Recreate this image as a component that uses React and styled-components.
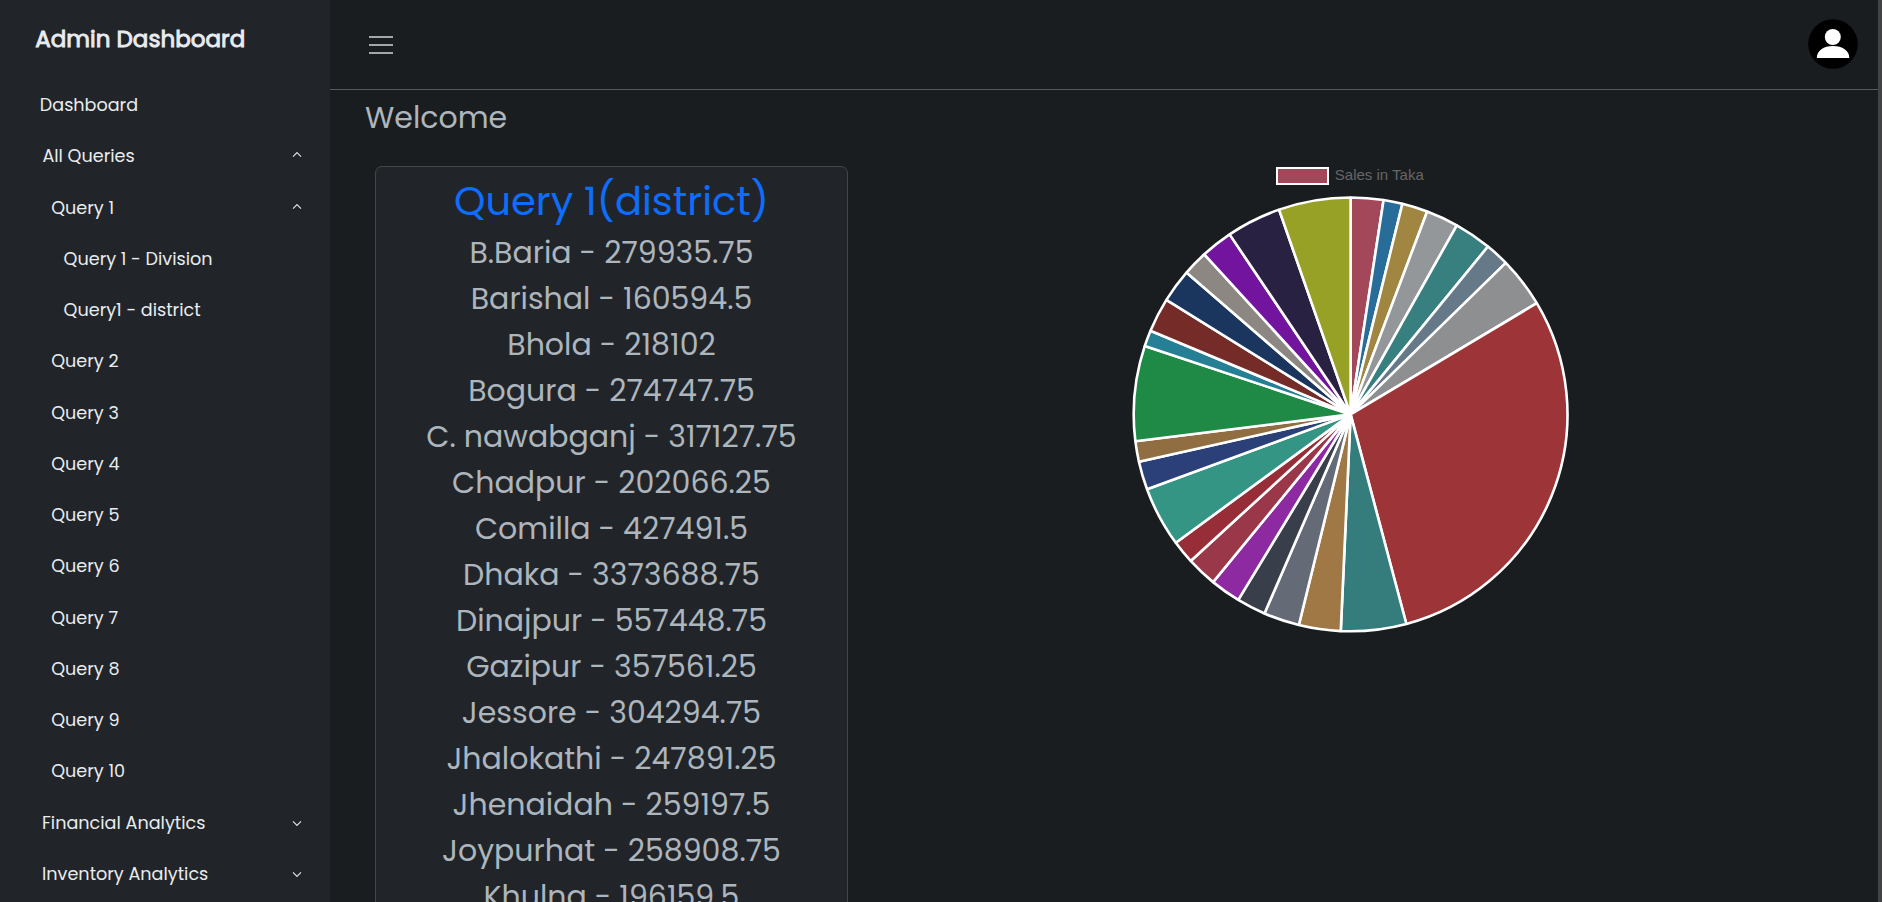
import React from "react";
import styled, { createGlobalStyle } from "styled-components";

const GlobalStyle = createGlobalStyle`
  *, *::before, *::after { box-sizing: border-box; }
  html, body, #root { height: 100%; margin: 0; }
  body {
    overflow: hidden;
    background: #1a1d20;
    color: #adb5bd;
    font-family: Poppins, Inter, "Open Sans", sans-serif;
  }
  h1, h2, p, ul { margin: 0; padding: 0; font-weight: 400; }
`;

const Shell = styled.div`
  display: flex;
  height: 902px;
  overflow: hidden;
`;

const Sidebar = styled.aside`
  flex: 0 0 330px;
  background: #212529;
  color: #e9ecef;
`;

const Brand = styled.h1`
  height: 79.4px;
  padding-left: 35.2px;
  font-size: 23.04px;
  line-height: 78px;
  -webkit-text-stroke: 0.9px currentColor;
`;

const NavItem = styled.a`
  display: flex;
  align-items: center;
  justify-content: space-between;
  height: 51.27px;
  padding: 0 28px 0 ${(p) => p.$indent}px;
  font-size: 17.6px;
  line-height: 26px;
`;

const Chevron = styled.svg`
  width: 10px;
  height: 6px;
  fill: none;
  stroke: #dee2e6;
  stroke-width: 1.2;
  transform: ${(p) => (p.$open ? "translateY(-1.4px) rotate(180deg)" : "translateY(0.3px)")};
`;

const Main = styled.main`
  flex: 1;
  min-width: 0;
`;

const TopBar = styled.header`
  display: flex;
  align-items: center;
  justify-content: space-between;
  height: 90px;
  padding: 0 20px 1px 39px;
  border-bottom: 1px solid #55595c;
`;

const MenuIcon = styled.svg`
  width: 24px;
  height: 18px;
  margin-top: 2px;
  fill: #a4a6a8;
`;

const Avatar = styled.svg`
  width: 50px;
  height: 50px;
`;

const Welcome = styled.h2`
  padding-left: 35px;
  height: 76px;
  font-size: 30px;
  line-height: 56px;
`;

const Columns = styled.div`
  display: flex;
  align-items: flex-start;
  padding-left: 45px;
`;

const Card = styled.section`
  flex: 0 0 473px;
  height: 1300px;
  border: 1px solid #424649;
  border-radius: 7px;
  background: #212529;
  text-align: center;
`;

const CardTitle = styled.h2`
  height: 63px;
  padding-top: 9px;
  color: #0d6efd;
  font-size: 40px;
  line-height: 50px;
`;

const District = styled.p`
  height: 46px;
  font-size: 30px;
  line-height: 46px;
`;

const ChartArea = styled.section`
  flex: 1;
  display: flex;
  flex-direction: column;
  align-items: center;
  padding-right: 26.4px;
`;

const Legend = styled.div`
  display: flex;
  align-items: center;
  gap: 6px;
  height: 20px;
  color: #666;
  font: 15px/18px "Liberation Sans", Arial, sans-serif;
`;

const LegendBox = styled.span`
  width: 53px;
  height: 18px;
  border: 2px solid #fff;
  background: #a3475a;
`;

const LegendLabel = styled.span`
  padding-bottom: 2px;
`;

const Pie = styled.svg`
  width: 436px;
  height: 436px;
  margin-top: 10px;
  overflow: visible;
`;

const Scrollbar = styled.div`
  flex: 0 0 4px;
  background: #424242;
`;

const NAV = [
  ["Dashboard", 39.8],
  ["All Queries", 42.4, "open"],
  ["Query 1", 51.2, "open"],
  ["Query 1 - Division", 63.6],
  ["Query1 - district", 63.6],
  ["Query 2", 51.2],
  ["Query 3", 51.2],
  ["Query 4", 51.2],
  ["Query 5", 51.2],
  ["Query 6", 51.2],
  ["Query 7", 51.2],
  ["Query 8", 51.2],
  ["Query 9", 51.2],
  ["Query 10", 51.2],
  ["Financial Analytics", 42, "closed"],
  ["Inventory Analytics", 42, "closed"],
];

const DISTRICTS = [
  ["B.Baria", "279935.75"],
  ["Barishal", "160594.5"],
  ["Bhola", "218102"],
  ["Bogura", "274747.75"],
  ["C. nawabganj", "317127.75"],
  ["Chadpur", "202066.25"],
  ["Comilla", "427491.5"],
  ["Dhaka", "3373688.75"],
  ["Dinajpur", "557448.75"],
  ["Gazipur", "357561.25"],
  ["Jessore", "304294.75"],
  ["Jhalokathi", "247891.25"],
  ["Jhenaidah", "259197.5"],
  ["Joypurhat", "258908.75"],
  ["Khulna", "196159.5"],
];

// End angle of each slice, clockwise from the top, and its colour.
const SLICES = [
  [8.75, "#a3475a"],
  [13.82, "#286c99"],
  [20.68, "#a08640"],
  [29.33, "#949799"],
  [39.3, "#38807f"],
  [45.7, "#657988"],
  [59.15, "#8e8f90"],
  [165.1, "#9d3437"],
  [182.6, "#347d7c"],
  [193.8, "#a07845"],
  [203.4, "#646b77"],
  [211.2, "#393f4a"],
  [219.35, "#8d2aa1"],
  [227.5, "#9a384a"],
  [233.7, "#972d36"],
  [249.8, "#359585"],
  [257.4, "#2b4078"],
  [262.9, "#916e42"],
  [288.4, "#1e8a46"],
  [292.7, "#257f95"],
  [301.87, "#752c28"],
  [310.83, "#1a365f"],
  [317.57, "#8c8783"],
  [326.1, "#73149e"],
  [340.74, "#282142"],
  [360, "#96a126"],
];

const RADIUS = 216.9;

function point(angle) {
  const a = (angle * Math.PI) / 180;
  return `${(RADIUS * Math.sin(a)).toFixed(2)} ${(-RADIUS * Math.cos(a)).toFixed(2)}`;
}

function PieChart() {
  return (
    <Pie viewBox="-218.6 -218.4 436 436">
      {SLICES.map(([end, color], i) => {
        const start = i ? SLICES[i - 1][0] : 0;
        return (
          <path
            key={color}
            d={`M${point(start)}A${RADIUS} ${RADIUS} 0 0 1 ${point(end)}L0 0Z`}
            fill={color}
            stroke="#fff"
            strokeWidth="2.6"
            strokeLinejoin="bevel"
          />
        );
      })}
    </Pie>
  );
}

export default function App() {
  return (
    <>
      <GlobalStyle />
      <Shell>
        <Sidebar>
          <Brand>Admin Dashboard</Brand>
          <nav>
            {NAV.map(([label, indent, state]) => (
              <NavItem key={label} $indent={indent}>
                {label}
                {state && (
                  <Chevron $open={state === "open"} viewBox="0 0 10 6">
                    <path d="M1 1l4 4 4-4" />
                  </Chevron>
                )}
              </NavItem>
            ))}
          </nav>
        </Sidebar>
        <Main>
          <TopBar>
            <MenuIcon viewBox="0 0 24 18">
              <path d="M0 0h24v2H0zM0 8h24v2H0zM0 16h24v2H0z" />
            </MenuIcon>
            <Avatar viewBox="0 0 50 50">
              <circle cx="25" cy="25" r="24.8" fill="#000" />
              <circle cx="24.8" cy="18" r="8" fill="#fff" />
              <path d="M8.8 39C8.8 31.5 15.6 27 25 27s16.3 4.500 16.300 12z" fill="#fff" />
            </Avatar>
          </TopBar>
          <Welcome>Welcome</Welcome>
          <Columns>
            <Card>
              <CardTitle>Query 1(district)</CardTitle>
              {DISTRICTS.map(([name, sales]) => (
                <District key={name}>{`${name} - ${sales}`}</District>
              ))}
            </Card>
            <ChartArea>
              <Legend>
                <LegendBox />
                <LegendLabel>Sales in Taka</LegendLabel>
              </Legend>
              <PieChart />
            </ChartArea>
          </Columns>
        </Main>
        <Scrollbar />
      </Shell>
    </>
  );
}
